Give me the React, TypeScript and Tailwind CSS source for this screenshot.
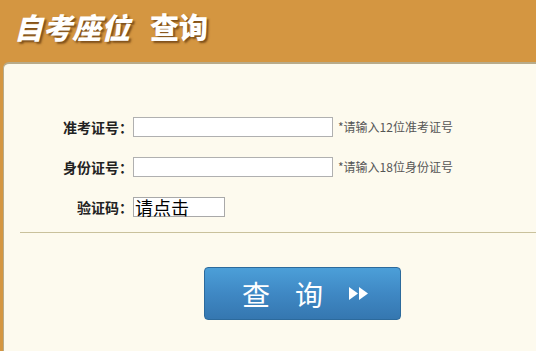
import React from 'react';

const cn = '"Noto Sans CJK SC", "Liberation Sans", sans-serif';

function Row({ label, hint, short }: { label: string; hint?: string; short?: boolean }) {
  return (
    <div className="flex items-center h-[20px]">
      <div className="w-[129px] shrink-0 text-right text-[14px] font-bold text-[#222] whitespace-nowrap">{label}</div>
      {short ? (
        <div className="w-[92px] h-[20px] border border-[#a9a9a9] bg-white flex items-center pl-[1px] text-[18px] leading-none text-black">
          请点击
        </div>
      ) : (
        <input className="w-[200px] h-[20px] border border-[#b0b0b0] bg-white outline-none" />
      )}
      {hint && <span className="ml-[5px] text-[12px] text-[#555]">{hint}</span>}
    </div>
  );
}

export default function App() {
  return (
    <div className="w-[536px] h-[351px] bg-[#d49641] flex flex-col overflow-hidden" style={{ fontFamily: cn }}>
      <div className="h-[62px] shrink-0 pl-[14px] pt-[12px] flex items-start">
        <span
          className="text-[29px] font-black italic text-white leading-none"
          style={{ textShadow: '2px 2px 2px rgba(90,50,10,0.7)' }}
        >
          自考座位
        </span>
        <span
          className="ml-[20px] text-[29px] font-black text-white leading-none"
          style={{ textShadow: '2px 2px 2px rgba(90,50,10,0.7)' }}
        >
          查询
        </span>
      </div>
      <div className="flex-1 ml-[3px] bg-[#fdfaee] rounded-tl-[6px] border-t-2 border-l border-[#b8ab8a] flex flex-col">
        <div className="pt-[53px] flex flex-col gap-[20px]">
          <Row label="准考证号：" hint="*请输入12位准考证号" />
          <Row label="身份证号：" hint="*请输入18位身份证号" />
          <Row label="验证码：" short />
        </div>
        <div className="ml-[16px] mt-[15px] h-px bg-[#c9c19c]" />
        <div className="pl-[200px] pt-[34px]">
          <div
            className="w-[197px] h-[53px] rounded-[4px] border border-[#2c6a9c] flex items-center pl-[37px] text-white"
            style={{ background: 'linear-gradient(#4c9fd8, #3f88c4 50%, #3577b0)' }}
          >
            <span className="text-[28px] leading-none">查</span>
            <span className="ml-[25px] text-[28px] leading-none">询</span>
            <svg className="ml-[25px]" width="21" height="13" viewBox="0 0 21 13">
              <polygon points="1,0 10,6.5 1,13" fill="#fff" />
              <polygon points="11,0 20,6.5 11,13" fill="#fff" />
            </svg>
          </div>
        </div>
      </div>
    </div>
  );
}
